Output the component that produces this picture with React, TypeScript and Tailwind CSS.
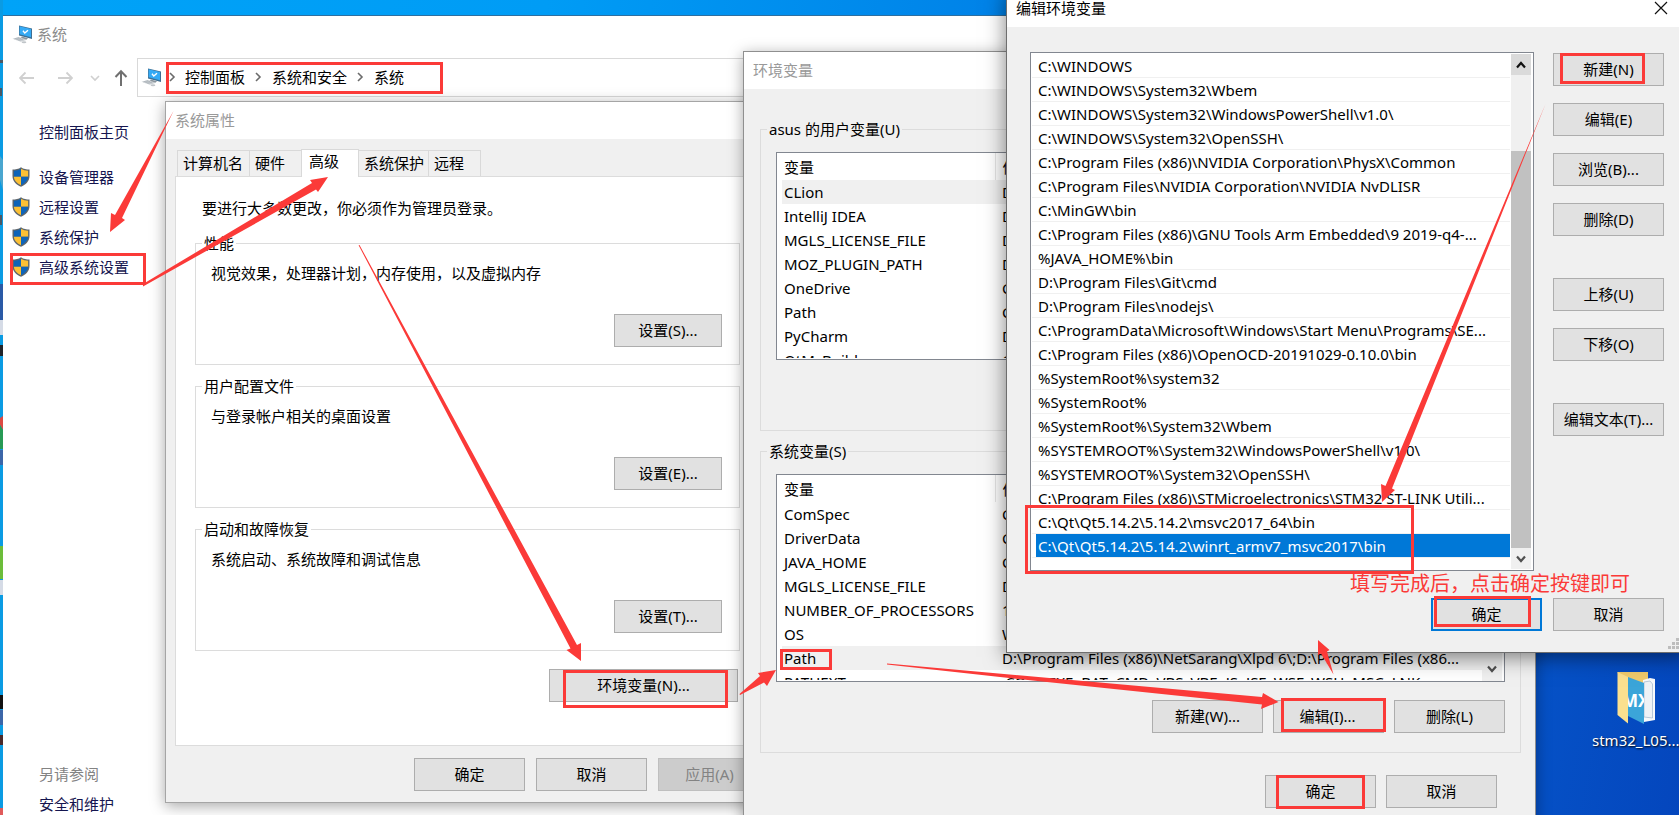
import React from 'react';

const pathEntries = [
  'C:\\WINDOWS',
  'C:\\WINDOWS\\System32\\Wbem',
  'C:\\WINDOWS\\System32\\WindowsPowerShell\\v1.0\\',
  'C:\\WINDOWS\\System32\\OpenSSH\\',
  'C:\\Program Files (x86)\\NVIDIA Corporation\\PhysX\\Common',
  'C:\\Program Files\\NVIDIA Corporation\\NVIDIA NvDLISR',
  'C:\\MinGW\\bin',
  'C:\\Program Files (x86)\\GNU Tools Arm Embedded\\9 2019-q4-...',
  '%JAVA_HOME%\\bin',
  'D:\\Program Files\\Git\\cmd',
  'D:\\Program Files\\nodejs\\',
  'C:\\ProgramData\\Microsoft\\Windows\\Start Menu\\Programs\\SE...',
  'C:\\Program Files (x86)\\OpenOCD-20191029-0.10.0\\bin',
  '%SystemRoot%\\system32',
  '%SystemRoot%',
  '%SystemRoot%\\System32\\Wbem',
  '%SYSTEMROOT%\\System32\\WindowsPowerShell\\v1.0\\',
  '%SYSTEMROOT%\\System32\\OpenSSH\\',
  'C:\\Program Files (x86)\\STMicroelectronics\\STM32 ST-LINK Utili...',
  'C:\\Qt\\Qt5.14.2\\5.14.2\\msvc2017_64\\bin',
  'C:\\Qt\\Qt5.14.2\\5.14.2\\winrt_armv7_msvc2017\\bin',
];

const userVars: [string, string][] = [
  ['CLion', 'D:\\'],
  ['IntelliJ IDEA', 'D:\\'],
  ['MGLS_LICENSE_FILE', 'D:\\'],
  ['MOZ_PLUGIN_PATH', 'D:\\'],
  ['OneDrive', 'C:\\'],
  ['Path', 'C:\\'],
  ['PyCharm', 'D:\\'],
  ['QtMsBuild', 'C:\\'],
];

const systemVars: [string, string][] = [
  ['ComSpec', 'C:\\'],
  ['DriverData', 'C:\\'],
  ['JAVA_HOME', 'C:\\'],
  ['MGLS_LICENSE_FILE', 'D:\\'],
  ['NUMBER_OF_PROCESSORS', '1'],
  ['OS', 'W'],
  ['Path', 'D:\\Program Files (x86)\\NetSarang\\Xlpd 6\\;D:\\Program Files (x86...'],
  ['PATHEXT', '.COM;.EXE;.BAT;.CMD;.VBS;.VBE;.JS;.JSE;.WSF;.WSH;.MSC;.LNK'],
];

const sections = [
  { title: '性能', text: '视觉效果，处理器计划，内存使用，以及虚拟内存', button: '设置(S)...' },
  { title: '用户配置文件', text: '与登录帐户相关的桌面设置', button: '设置(E)...' },
  { title: '启动和故障恢复', text: '系统启动、系统故障和调试信息', button: '设置(T)...' },
];

function Btn({ children, className = 'w-[111px]', disabled = false }: { children: React.ReactNode; className?: string; disabled?: boolean }) {
  return (
    <button
      type="button"
      disabled={disabled}
      className={`h-[33px] shrink-0 border border-[#adadad] bg-[#e1e1e1] pb-[2px] text-center leading-5 text-black disabled:border-[#bfbfbf] disabled:bg-[#cccccc] disabled:text-[#838383] ${className}`}
    >
      {children}
    </button>
  );
}

function ComputerIcon() {
  return (
    <svg viewBox="0 0 20 20" className="h-5 w-5 shrink-0" aria-hidden="true">
      <path d="M7 1.5 L20 4.5 V15 L7 11.5 Z" fill="#3f6f92" />
      <path d="M7.6 2.2 L19 5 V13.3 L7.6 10.3 Z" fill="#35aaf5" />
      <path d="M11 6.8 L12.800 9.100 L16 6.3" fill="none" stroke="#fff" strokeWidth="1.4" />
      <path d="M10 12.6 L16 14.3 L14 16 L8.5 14.2 Z" fill="#8a949c" />
      <path d="M0.5 14.8 L7 13 L15 15.7 L8.8 17.8 Z" fill="#c9ced2" />
      <path d="M2.5 14.8 L7 13.7 M4.5 15.600 L9 14.4 M6.5 16.400 L11 15.200" stroke="#a0a8ae" strokeWidth=".6" />
      <ellipse cx="12" cy="18.2" rx="2.4" ry="1" fill="#c0c5c9" />
    </svg>
  );
}

function ShieldIcon() {
  return (
    <svg viewBox="0 0 18 20" className="h-5 w-[18px] shrink-0" aria-hidden="true">
      <path d="M9 0.3 C6.5 2.2 3.5 2.6 0.5 2.6 V9 C0.5 14.5 4.5 17.8 9 19.7 C13.5 17.8 17.5 14.5 17.5 9 V2.6 C14.5 2.6 11.5 2.2 9 0.3Z" fill="#5e666c" />
      <path d="M9 1.8 C7 3 4.4 3.8 1.9 3.8 V9.7 H9Z" fill="#0e64b8" />
      <path d="M9 1.8 C11 3 13.6 3.8 16.1 3.8 V9.7 H9Z" fill="#fcc034" />
      <path d="M1.9 9.7 H9 V18.2 C5 16.5 2.2 13.7 1.9 9.7Z" fill="#fcc034" />
      <path d="M16.1 9.7 H9 V18.2 C13 16.5 15.8 13.7 16.1 9.7Z" fill="#0e64b8" />
    </svg>
  );
}

function Chevron({ className }: { className: string }) {
  return (
    <svg viewBox="0 0 10 10" className={className} fill="none" stroke="currentColor" strokeWidth="1.6" aria-hidden="true">
      <path d="M3 1 L7 5 L3 9" />
    </svg>
  );
}

function ScrollArrow({ up = false }: { up?: boolean }) {
  return (
    <svg viewBox="0 0 12 12" className="h-3 w-3" fill="none" stroke={up ? '#111' : '#505050'} strokeWidth="2.2" aria-hidden="true">
      <path d={up ? 'M2 8.5 L6 4 L10 8.5' : 'M2 3.5 L6 8 L10 3.5'} />
    </svg>
  );
}

function SystemWindow() {
  return (
    <section className="absolute left-[3px] top-[15px] h-[860px] w-[1400px] border-t border-[#2f6f9f] bg-white">
      <header className="flex h-9 items-center gap-[5px] pl-[9px] text-[#8c8c8c]">
        <ComputerIcon />
        <h1 className="leading-5">系统</h1>
      </header>
      <nav className="mt-[6px] flex h-[39px] items-center" aria-label="地址栏">
        <div className="flex w-[134px] shrink-0 items-center pl-4 text-[#d0d0d0]">
          <button type="button" aria-label="后退">
            <svg viewBox="0 0 16 16" className="h-4 w-4" fill="none" stroke="currentColor" strokeWidth="1.8"><path d="M15 8 H1 M6.5 2.5 L1 8 L6.5 13.5" /></svg>
          </button>
          <button type="button" aria-label="前进" className="ml-[22px]">
            <svg viewBox="0 0 16 16" className="h-4 w-4" fill="none" stroke="currentColor" strokeWidth="1.8"><path d="M1 8 H15 M9.5 2.5 L15 8 L9.5 13.5" /></svg>
          </button>
          <button type="button" aria-label="最近" className="ml-[17px]">
            <Chevron className="h-[10px] w-[10px] rotate-90" />
          </button>
          <button type="button" aria-label="上移一级" className="ml-[14px] text-[#707070]">
            <svg viewBox="0 0 14 18" className="h-[18px] w-[14px]" fill="none" stroke="currentColor" strokeWidth="2"><path d="M7 17 V2 M1.5 8 L7 2.2 L12.5 8" /></svg>
          </button>
        </div>
        <div className="flex h-[39px] flex-1 items-center border border-[#d9d9d9] pb-px pl-[3px] text-[#6b6b6b]">
          <ComputerIcon />
          <Chevron className="ml-[6px] h-[10px] w-[10px]" />
          <a href="#panel" className="ml-[8px] leading-5 text-black">控制面板</a>
          <Chevron className="ml-[8px] h-[10px] w-[10px]" />
          <a href="#security" className="ml-[9px] leading-5 text-black">系统和安全</a>
          <Chevron className="ml-[8px] h-[10px] w-[10px]" />
          <a href="#system" className="ml-[9px] leading-5 text-black">系统</a>
        </div>
      </nav>
      <aside className="flex w-[160px] flex-col pl-[9px] text-[#15154f]">
        <a href="#home" className="ml-[27px] mt-[25px] leading-5">控制面板主页</a>
        <ul className="mt-[20px]">
          {['设备管理器', '远程设置', '系统保护', '高级系统设置'].map((t) => (
            <li key={t} className="h-[30px]">
              <a href="#settings" className="flex h-[30px] items-center gap-[9px]">
                <ShieldIcon />
                <span className="leading-5">{t}</span>
              </a>
            </li>
          ))}
        </ul>
        <h2 className="ml-[27px] mt-[482px] leading-5 text-[#838383]">另请参阅</h2>
        <a href="#maintenance" className="ml-[27px] mt-[10px] leading-5">安全和维护</a>
      </aside>
    </section>
  );
}

function PropertiesWindow() {
  const tab = 'border border-[#d9d9d9] bg-[#f0f0f0] h-[26px] border-b-0 text-left whitespace-nowrap pl-[5px] -ml-px';
  return (
    <section className="absolute left-[165px] top-[101px] h-[702px] w-[620px] border border-[#a5a5a5] bg-[#f0f0f0] shadow-[0_3px_14px_rgba(0,0,0,0.35)]">
      <header className="flex h-[37px] items-center bg-white pb-[2px] pl-[9px] text-[#999999]">
        <h2 className="leading-5">系统属性</h2>
      </header>
      <div className="pl-[9px] pt-[10px]">
        <div role="tablist" className="relative z-10 flex h-7 items-end pb-px pl-[3px]">
          <button role="tab" type="button" className={`${tab} w-[73px]`}>计算机名</button>
          <button role="tab" type="button" className={`${tab} w-[53px]`}>硬件</button>
          <button role="tab" type="button" aria-selected="true" className="-mb-px -ml-px h-7 w-[58px] border border-b-0 border-[#d9d9d9] bg-white pb-[5px] pl-[7px] text-left">高级</button>
          <button role="tab" type="button" className={`${tab} w-[71px]`}>系统保护</button>
          <button role="tab" type="button" className={`${tab} w-[53px]`}>远程</button>
        </div>
        <div className="-mt-px h-[570px] w-[590px] border border-[#dcdcdc] bg-white pl-[19px] pt-[21px]">
          <p className="pl-[7px] leading-5">要进行大多数更改，你必须作为管理员登录。</p>
          <div className="mt-[15px] flex w-[545px] flex-col gap-[11px]">
            {sections.map((s) => (
              <fieldset key={s.title} className="h-[132px] border border-[#dcdcdc]">
                <legend className="ml-[6px] px-[2px] leading-5">{s.title}</legend>
                <p className="mt-[10px] pl-[15px] leading-5">{s.text}</p>
                <div className="mt-[31px] flex justify-end pr-[17px]">
                  <Btn className="w-[108px]">{s.button}</Btn>
                </div>
              </fieldset>
            ))}
          </div>
          <div className="mt-[18px] flex w-[543px] justify-end">
            <Btn className="w-[189px]">环境变量(N)...</Btn>
          </div>
        </div>
        <footer className="mt-3 flex gap-[11px] pl-[239px]">
          <Btn>确定</Btn>
          <Btn>取消</Btn>
          <Btn className="w-[111px] pr-2" disabled>应用(A)</Btn>
        </footer>
      </div>
    </section>
  );
}

function VariableTable({ label, rows, selected, scroll }: { label: string; rows: [string, string][]; selected: string; scroll?: boolean }) {
  return (
    <div className="flex h-[208px] w-[729px] overflow-hidden border border-[#828790] bg-white pl-[5px]">
      <div className="h-[205px] min-w-0 flex-1 overflow-hidden">
        <table aria-label={label} className="w-full table-fixed border-collapse text-left">
          <colgroup>
            <col className="w-[213px]" />
            <col />
          </colgroup>
          <thead>
            <tr className="h-[27px]">
              <th className="border-r border-[#e5e5e5] p-0 pl-[2px] pt-px font-normal leading-5">变量</th>
              <th className="p-0 pl-[7px] pt-px font-normal leading-5">值</th>
            </tr>
          </thead>
          <tbody>
            {rows.map(([k, v]) => (
              <tr key={k} className={k === selected ? 'h-6 bg-[#f0f0f0]' : 'h-6'}>
                <td className="whitespace-nowrap p-0 pb-px pl-[2px] leading-[22px]">{k}</td>
                <td className="overflow-hidden whitespace-nowrap p-0 pb-px pl-[7px] leading-[22px]">{v}</td>
              </tr>
            ))}
          </tbody>
        </table>
      </div>
      {scroll && (
        <div className="flex w-5 shrink-0 flex-col items-center justify-end bg-[#f0f0f0] pb-[6px]">
          <ScrollArrow />
        </div>
      )}
      <div className="w-[2px]" />
    </div>
  );
}

function VariablesWindow() {
  return (
    <section className="absolute left-[743px] top-[51px] h-[782px] w-[793px] border border-[#8f8f8f] bg-[#f0f0f0] shadow-[0_3px_14px_rgba(0,0,0,0.35)]">
      <header className="flex h-[37px] items-center bg-white pb-[2px] pl-[9px] text-[#999999]">
        <h2 className="leading-5">环境变量</h2>
      </header>
      <div className="flex flex-col gap-[10px] pl-4 pr-[14px] pt-[30px]">
        <fieldset className="h-[312px] border border-[#dcdcdc]">
          <legend className="ml-[6px] px-[2px] leading-5">asus 的用户变量(U)</legend>
          <div className="pl-[15px] pt-[13px]">
            <VariableTable label="用户变量" rows={userVars} selected="CLion" />
          </div>
        </fieldset>
        <fieldset className="h-[312px] border border-[#dcdcdc]">
          <legend className="ml-[6px] px-[2px] leading-5">系统变量(S)</legend>
          <div className="pl-[15px] pt-[13px]">
            <VariableTable label="系统变量" rows={systemVars} selected="Path" scroll />
            <div className="mt-[18px] flex w-[729px] justify-end gap-[10px]">
              <Btn>新建(W)...</Btn>
              <Btn className="w-[111px] pr-[2px]">编辑(I)...</Btn>
              <Btn>删除(L)</Btn>
            </div>
          </div>
        </fieldset>
      </div>
      <footer className="mt-[22px] flex justify-end gap-[10px] pr-[38px]">
        <Btn>确定</Btn>
        <Btn>取消</Btn>
      </footer>
    </section>
  );
}

function EditWindow() {
  return (
    <section className="absolute left-[1006px] top-[-11px] h-[664px] w-[681px] border border-[#6e6e6e] bg-[#f0f0f0] shadow-[0_4px_20px_rgba(0,0,0,0.5)]">
      <header className="flex h-[37px] items-center justify-between bg-white pb-[2px] pl-[9px] pr-[18px]">
        <h2 className="leading-5">编辑环境变量</h2>
        <button type="button" aria-label="关闭">
          <svg viewBox="0 0 14 14" className="h-[14px] w-[14px]" fill="none" stroke="#111" strokeWidth="1.2"><path d="M1 1 L13 13 M13 1 L1 13" /></svg>
        </button>
      </header>
      <div className="flex gap-[19px] pl-[23px] pt-[25px]">
        <div className="flex h-[519px] w-[504px] border border-[#828790] bg-white py-px pl-px pr-[2px]">
          <ul className="min-w-0 flex-1">
            {pathEntries.map((p, i) => (
              <li key={p} className="h-6 border-b border-[#f0f0f0] pl-1">
                <span className={`block h-full overflow-hidden whitespace-nowrap pl-[2px] leading-[24px] ${i === 20 ? 'bg-[#0078d7] text-white' : ''}`}>{p}</span>
              </li>
            ))}
          </ul>
          <div className="ml-px flex w-5 shrink-0 flex-col bg-[#f0f0f0]">
            <div className="flex h-[21px] items-center justify-center bg-[#dadada]"><ScrollArrow up /></div>
            <div className="mt-[76px] flex-1 bg-[#c1c1c1]" />
            <div className="flex h-[21px] items-center justify-center"><ScrollArrow /></div>
          </div>
        </div>
        <div className="flex flex-col gap-[17px] pt-px">
          <Btn>新建(N)</Btn>
          <Btn>编辑(E)</Btn>
          <Btn>浏览(B)...</Btn>
          <Btn>删除(D)</Btn>
          <div className="mt-[25px] flex flex-col gap-[17px]">
            <Btn>上移(U)</Btn>
            <Btn>下移(O)</Btn>
          </div>
          <Btn className="mt-[25px] w-[111px]">编辑文本(T)...</Btn>
        </div>
      </div>
      <footer className="mt-[27px] flex justify-end gap-[11px] pr-[22px]">
        <button type="button" className="h-[33px] w-[111px] border-2 border-[#0078d7] bg-[#e1e1e1] pb-[2px] leading-5">确定</button>
        <Btn>取消</Btn>
      </footer>
      <svg viewBox="0 0 16 16" className="absolute bottom-[2px] right-[2px] h-4 w-4" fill="#bdbdbd" aria-hidden="true">
        <path d="M12 0h3v3h-3zM8 4h3v3H8zM12 4h3v3h-3zM4 8h3v3H4zM8 8h3v3H8zM12 8h3v3h-3zM0 12h3v3H0zM4 12h3v3H4zM8 12h3v3H8zM12 12h3v3h-3z" />
      </svg>
    </section>
  );
}

function DesktopItems() {
  return (
    <>
      <svg viewBox="0 0 3 815" className="absolute left-0 top-0 h-[815px] w-[3px]" aria-hidden="true">
        <rect width="3" height="815" fill="#0a9be3" />
        <path d="M0 60h3v3H0zM0 88h2v8H0zM0 215h2v10H0z" fill="#4b5864" />
        <path d="M0 156 L3 160 V190 L0 180Z" fill="#4aa6cf" />
        <path d="M0 284h3v36H0z" fill="#2a5aa6" />
        <path d="M0 320h3v15H0z" fill="#d5dbe6" />
        <path d="M0 345h3v11H0z" fill="#20242a" />
        <path d="M0 418 L3 416 V430 L0 425Z" fill="#dc4a42" />
        <path d="M0 425 L3 430 V449 H0Z" fill="#279a55" />
        <path d="M0 450h3v15H0z" fill="#3c66a8" />
        <path d="M0 546h3v33H0z" fill="#6cbd3a" />
        <path d="M0 580h3v15H0z" fill="#d5dbe6" />
        <path d="M0 695h3v14H0z" fill="#111" />
        <path d="M0 710h3v15H0z" fill="#3c66a8" />
        <path d="M0 735h3v10H0z" fill="#4a2a2a" />
        <path d="M0 808h3v7H0z" fill="#e05a5a" />
      </svg>
      <div className="absolute left-[1592px] top-[668px] flex flex-col items-start text-white">
        <svg viewBox="0 0 44 58" className="ml-[22px] h-[58px] w-11" aria-hidden="true">
          <path d="M3.500 4 H34 V46 H14 Z" fill="#efca6c" />
          <path d="M29 12 L36 10 L41 11 V52 L30 54Z" fill="#f7f9fb" />
          <path d="M30 14 L36 13 L38.500 16 V50 L30 49Z" fill="#eef2f6" stroke="#9fb6cc" strokeWidth=".7" />
          <path d="M14 9 L30 15 V56 L14 48Z" fill="#3ba5d9" />
          <svg x="14" y="20" width="16" height="26" viewBox="0 0 16 26">
            <text x="-6" y="19" fill="#fff" fontSize="17" fontWeight="700" fontFamily="Open Sans">MX</text>
          </svg>
          <path d="M3.500 4 L14 9 V55.500 L3.500 47Z" fill="#fbe08f" />
        </svg>
        <span className="mt-1 whitespace-nowrap leading-5 [text-shadow:1px_1px_2px_#000]">stm32_L05...</span>
      </div>
    </>
  );
}

function Annotations() {
  const box = 'absolute border-[3px] border-[#fb3a38]';
  return (
    <div className="pointer-events-none absolute inset-0">
      <div className={`${box} left-[166px] top-[62px] h-8 w-[277px]`} />
      <div className={`${box} left-[10px] top-[253px] h-8 w-[136px]`} />
      <div className={`${box} left-[563px] top-[670px] h-[38px] w-[165px]`} />
      <div className={`${box} left-[780px] top-[649px] h-[21px] w-[52px]`} />
      <div className={`${box} left-[1281px] top-[698px] h-[34px] w-[105px]`} />
      <div className={`${box} left-[1276px] top-[775px] h-[34px] w-[89px]`} />
      <div className={`${box} left-[1560px] top-[53px] h-[31px] w-[85px]`} />
      <div className={`${box} left-[1025px] top-[505px] h-[69px] w-[389px]`} />
      <div className={`${box} left-[1434px] top-[596px] h-[31px] w-[97px]`} />
      <p className="absolute left-[1350px] top-[571px] whitespace-nowrap text-xl leading-[26px] text-[#fb3a38]">填写完成后，点击确定按键即可</p>
      <svg viewBox="0 0 1679 815" className="absolute left-0 top-0 h-[815px] w-[1679px]" fill="#fb3a38" aria-hidden="true">
        <path d="M173.500 111 L115 215 L111 213 L110 232 L125 220 L122 218Z" />
        <path d="M143 284 L312 183 L310 180 L328 177 L318 192 L316 189.500 L143 286.500Z" />
        <path d="M358.600 245.300 L570.500 648.500 L566.500 650 L581 661 L581 643 L577 645 L359.500 245Z" />
        <path d="M739.500 694 L760 676 L758 673 L776 670 L767 686 L764 682.500 L740 695Z" />
        <path d="M887 663.500 L1262 697 L1263 693 L1278.500 702 L1261 709 L1262 704.500 L1000 677 L887 664.500Z" />
        <path d="M1545.500 104 L1385.500 486 L1381 484 L1382 502 L1395 490 L1392 488.500Z" />
        <path d="M1333.500 674.500 L1321 653.500 L1318 655 L1318 640 L1329.500 650 L1327 651.500Z" />
      </svg>
    </div>
  );
}

export default function App() {
  return (
    <main className="relative h-screen min-h-[815px] w-full overflow-hidden bg-[linear-gradient(100deg,#00a3f8_0%,#009cf5_30%,#007fe6_58%,#0659cd_85%,#0446bd_100%)] font-['Noto_Sans','Noto_Sans_CJK_SC',sans-serif] text-[15px] text-black">
      <DesktopItems />
      <SystemWindow />
      <PropertiesWindow />
      <VariablesWindow />
      <EditWindow />
      <Annotations />
    </main>
  );
}
